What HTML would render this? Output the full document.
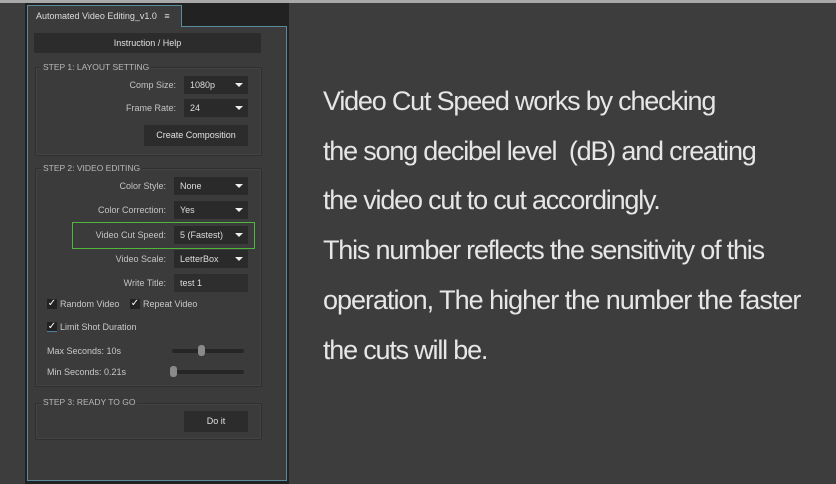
<!DOCTYPE html>
<html><head><meta charset="utf-8"><style>
*{margin:0;padding:0;box-sizing:border-box}
body{width:836px;height:484px;background:#3d3d3d;position:relative;overflow:hidden;font-family:"Liberation Sans",sans-serif}
.a{position:absolute}
.t{font-size:9px;color:#c8c8c8;white-space:nowrap}
.grp{position:absolute;border:1px solid #2f2f2f;border-radius:2px;box-shadow:inset 0 0 0 1px #444}
.lbl{position:absolute;font-size:8.5px;color:#b8b8b8;background:#3b3b3b;padding:0 2px;white-space:nowrap}
.dd{position:absolute;background:#2a2a2a;height:18px;font-size:9px;color:#ddd;line-height:18px;padding-left:6px}
.dd.arr:after{content:"";position:absolute;right:5px;top:7px;border-left:4px solid transparent;border-right:4px solid transparent;border-top:4px solid #eee}
.r{position:absolute;text-align:right;width:120px;font-size:9px;color:#c4c4c4}
.btn{position:absolute;background:#2c2c2c;color:#e0e0e0;font-size:9px;text-align:center}
.cb{position:absolute;width:10px;height:10px;background:#222;color:#fff;font-size:10px;line-height:10px;text-align:center}
.big{position:absolute;left:323px;color:#e6e6e6;font-size:27px;letter-spacing:-1.2px;white-space:nowrap;font-weight:normal}
</style></head><body>
<div class="a" style="left:0;top:0;width:836px;height:3px;background:#a9a9a9"></div>
<div class="a" style="left:25px;top:3px;width:264px;height:481px;background:#222"></div>
<div class="a" style="left:27px;top:5px;width:155px;height:24px;background:#3b3b3b;border:1px solid #5b8aa0;border-bottom:none"></div>
<div class="a t" style="left:36px;top:11px;color:#ddd">Automated Video Editing_v1.0 &nbsp; ≡</div>
<div class="a" style="left:27px;top:26px;width:260px;height:455px;background:#3b3b3b;border:1px solid #5b8aa0"></div>
<div class="a" style="left:28px;top:26px;width:153px;height:3px;background:#3b3b3b"></div>
<div class="btn" style="left:34px;top:33px;width:227px;height:20px;line-height:20px">Instruction / Help</div>

<div class="grp" style="left:35px;top:67px;width:227px;height:89px"></div>
<div class="lbl" style="left:41px;top:62px">STEP 1: LAYOUT SETTING</div>
<div class="r" style="left:56px;top:80px">Comp Size:</div>
<div class="dd arr" style="left:184px;top:76px;width:64px">1080p</div>
<div class="r" style="left:56px;top:103px">Frame Rate:</div>
<div class="dd arr" style="left:184px;top:99px;width:64px">24</div>
<div class="btn" style="left:144px;top:125px;width:104px;height:21px;line-height:21px">Create Composition</div>

<div class="grp" style="left:35px;top:168px;width:227px;height:219px"></div>
<div class="lbl" style="left:41px;top:163px">STEP 2: VIDEO EDITING</div>
<div class="r" style="left:46px;top:181px">Color Style:</div>
<div class="dd arr" style="left:174px;top:177px;width:74px">None</div>
<div class="r" style="left:46px;top:205px">Color Correction:</div>
<div class="dd arr" style="left:174px;top:201px;width:74px">Yes</div>
<div class="a" style="left:72px;top:222px;width:183px;height:27px;border:1px solid #4fb83c"></div>
<div class="r" style="left:46px;top:230px">Video Cut Speed:</div>
<div class="dd arr" style="left:174px;top:226px;width:74px">5 (Fastest)</div>
<div class="r" style="left:46px;top:254px">Video Scale:</div>
<div class="dd arr" style="left:174px;top:250px;width:74px">LetterBox</div>
<div class="r" style="left:46px;top:278px">Write Title:</div>
<div class="dd" style="left:174px;top:274px;width:74px;background:#2e2e2e">test 1</div>
<div class="cb" style="left:47px;top:299px">✓</div><div class="a t" style="left:60px;top:299px">Random Video</div>
<div class="cb" style="left:130px;top:299px">✓</div><div class="a t" style="left:143px;top:299px">Repeat Video</div>
<div class="cb" style="left:47px;top:322px;border-bottom:1px solid #4a7fa0">✓</div><div class="a t" style="left:60px;top:322px">Limit Shot Duration</div>
<div class="a t" style="left:47px;top:346px">Max Seconds: 10s</div>
<div class="a" style="left:172px;top:349px;width:72px;height:4px;background:#262626;border-radius:2px"></div>
<div class="a" style="left:198px;top:345px;width:7px;height:11px;background:#8a8a8a;border-radius:3px"></div>
<div class="a t" style="left:47px;top:367px">Min Seconds: 0.21s</div>
<div class="a" style="left:172px;top:370px;width:72px;height:4px;background:#262626;border-radius:2px"></div>
<div class="a" style="left:170px;top:366px;width:7px;height:11px;background:#8a8a8a;border-radius:3px"></div>

<div class="grp" style="left:35px;top:403px;width:227px;height:37px"></div>
<div class="lbl" style="left:41px;top:397px">STEP 3: READY TO GO</div>
<div class="btn" style="left:184px;top:411px;width:64px;height:21px;line-height:21px">Do it</div>

<div class="big" style="top:86px">Video Cut Speed works by checking</div>
<div class="big" style="top:136px">the song decibel level &nbsp;(dB) and creating</div>
<div class="big" style="top:185px">the video cut to cut accordingly.</div>
<div class="big" style="top:235px">This number reflects the sensitivity of this</div>
<div class="big" style="top:285px;letter-spacing:-1px">operation, The higher the number the faster</div>
<div class="big" style="top:335px">the cuts will be.</div>
</body></html>
